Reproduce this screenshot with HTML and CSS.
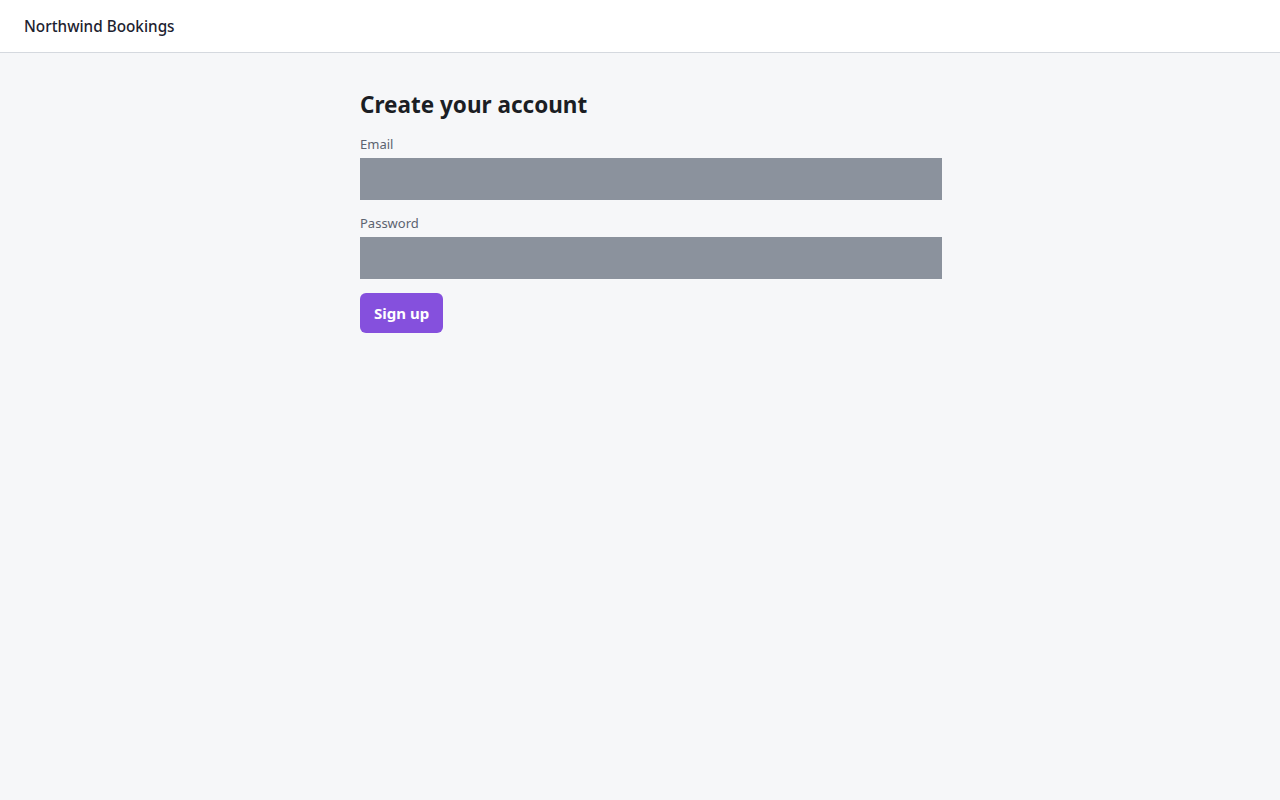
FILE: index.html
```html
<!DOCTYPE html>
<html lang="en">
<head>
<meta charset="utf-8">
<title>Northwind Bookings</title>
<link rel="stylesheet" href="styles.css">
</head>
<body>
<header class="topbar">
  <span class="brand">Northwind Bookings</span>
</header>
<main class="page">
  <form class="signup">
    <h1 class="title">Create your account</h1>
    <label class="field">
      <span class="label">Email</span>
      <input class="input" type="email">
    </label>
    <label class="field">
      <span class="label">Password</span>
      <input class="input" type="password">
    </label>
    <button class="btn" type="button">Sign up</button>
  </form>
</main>
</body>
</html>
```

FILE: styles.css
```css
* { box-sizing: border-box; }
html, body { margin: 0; padding: 0; }
body {
  background: #f6f7f9;
  font-family: "Noto Sans", "Open Sans", sans-serif;
  color: #1b1e24;
  min-height: 800px;
}
.topbar {
  height: 53px;
  background: #ffffff;
  border-bottom: 1px solid #d5d9df;
  display: flex;
  align-items: center;
  padding: 0 24px;
}
.brand {
  font-size: 15.3px;
  font-weight: 500;
  color: #1d2230;
}
.page {
  display: flex;
  justify-content: center;
}
.signup {
  width: 560px;
  padding-top: 37px;
  display: flex;
  flex-direction: column;
  align-items: flex-start;
}
.title {
  margin: 0 0 14px;
  font-size: 22.5px;
  font-weight: 700;
  line-height: 30px;
  color: #1b1e24;
}
.field {
  display: flex;
  flex-direction: column;
  margin-bottom: 13px;
}
.label {
  font-size: 13px;
  line-height: 20px;
  color: #5c6370;
  margin-bottom: 4px;
}
.input {
  box-sizing: content-box;
  width: 560px;
  height: 42px;
  padding: 0 11px;
  margin: 0;
  border: none;
  background: #8b929d;
  font: inherit;
}
.btn {
  margin-top: 1px;
  height: 40px;
  padding: 0 14px;
  border: none;
  border-radius: 6px;
  background: #8550dd;
  color: #ffffff;
  font-family: inherit;
  font-size: 15px;
  font-weight: 700;
  cursor: pointer;
}
```
